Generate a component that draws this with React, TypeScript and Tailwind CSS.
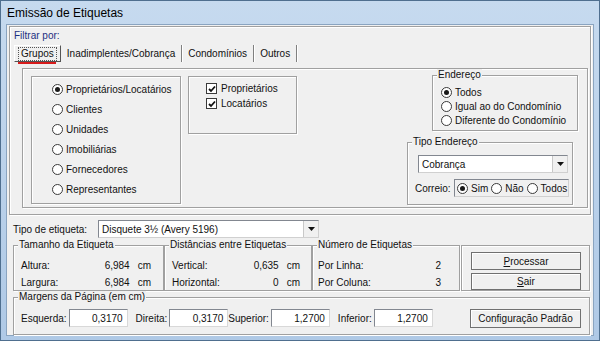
import type { ReactNode } from "react";

const font = { fontFamily: '"Liberation Sans", Arial, sans-serif' };

function Group({ title, className, children }: { title: string; className: string; children?: ReactNode }) {
  return (
    <div className={`relative border border-[#a0a0a0] shadow-[inset_1px_1px_0_#fff,1px_1px_0_#fff] ${className}`}>
      <span className="absolute -top-[7px] left-[4px] bg-[#f0f0f0] px-[1px] leading-[12px] whitespace-nowrap">{title}</span>
      {children}
    </div>
  );
}

function Radio({ label, checked = false }: { label: string; checked?: boolean }) {
  return (
    <div className="flex items-center gap-[3px] whitespace-nowrap leading-[13px]">
      <span className="flex h-[11px] w-[11px] shrink-0 items-center justify-center rounded-full border-[1.5px] border-[#3a3a3a] bg-white">
        {checked && <span className="h-[5px] w-[5px] rounded-full bg-[#1a1a1a]" />}
      </span>
      <span>{label}</span>
    </div>
  );
}

function Check({ label }: { label: string }) {
  return (
    <div className="flex items-center gap-[4px] leading-[13px]">
      <span className="flex h-[11px] w-[11px] items-center justify-center border-[1.5px] border-[#3a3a3a] bg-white">
        <svg width="8" height="8" viewBox="0 0 8 8">
          <path d="M1 4 L3 6 L7 1.5" fill="none" stroke="#111" strokeWidth="1.8" />
        </svg>
      </span>
      <span>{label}</span>
    </div>
  );
}

function Arrow() {
  return (
    <span className="flex h-full w-[15px] items-center justify-center border-l border-[#c8c8c8] bg-[#f0f0f0]">
      <svg width="7" height="4" viewBox="0 0 7 4">
        <path d="M0 0 H7 L3.5 4 Z" fill="#111" />
      </svg>
    </span>
  );
}

function Combo({ value, className }: { value: string; className: string }) {
  return (
    <div className={`flex items-center border border-[#828790] border-r-[#d0d0d0] border-b-[#d0d0d0] bg-white ${className}`}>
      <span className="flex-1 pl-[3px]">{value}</span>
      <Arrow />
    </div>
  );
}

function Field({ label, value, className }: { label: string; value: string; className: string }) {
  return (
    <div className={`flex items-center ${className}`}>
      <span className="mr-[2px]">{label}</span>
      <span className="flex h-[18px] w-[59px] items-center justify-end border border-[#828790] border-r-[#d8d8d8] border-b-[#d8d8d8] bg-white pr-[4px]">
        {value}
      </span>
    </div>
  );
}

function Btn({ children, className }: { children: ReactNode; className: string }) {
  return (
    <div className={`flex items-center justify-center border border-[#707070] bg-[#f0f0f0] shadow-[inset_1px_1px_0_#fff] ${className}`}>
      {children}
    </div>
  );
}

export default function App() {
  return (
    <div style={font} className="flex h-[341px] w-[600px] flex-col border border-[#4f6f8f] bg-gradient-to-b from-[#c6daef] to-[#afc9e6] text-[10px] text-[#111]">
      <div className="flex h-[23px] items-center pl-[6px] text-[12px] text-black">Emissão de Etiquetas</div>
      <div className="mx-[5px] flex h-[312px] flex-col border border-[#8aa4c0] bg-[#f0f0f0]">
        {/* filtro */}
        <div className="mx-[2px] mt-[1px] h-[191px] border border-[#a0a0a0] shadow-[inset_1px_1px_0_#fff,1px_1px_0_#fff]">
          <div className="pl-[4px] pt-[2px] leading-[13px] text-[#1c2f80]">Filtrar por:</div>
          <div className="ml-[4px] mt-[3px] flex h-[17px] items-stretch">
            <div className="relative flex items-center border border-[#fff] border-r-[#555] border-b-[#555] px-[3px]">
              <span className="border border-dotted border-[#555] px-[2px] leading-[12px]">Grupos</span>
              <span className="absolute -bottom-[3px] left-[3px] h-[2px] w-[38px] bg-[#d81c1c]" />
            </div>
            <div className="flex items-center border-r border-[#808080] px-[6px] shadow-[1px_0_0_#fff]">Inadimplentes/Cobrança</div>
            <div className="flex items-center border-r border-[#808080] px-[6px] shadow-[1px_0_0_#fff]">Condomínios</div>
            <div className="flex items-center border-r border-[#808080] px-[6px] shadow-[1px_0_0_#fff]">Outros</div>
          </div>
          <div className="ml-[12px] mr-[2px] mt-[6px] flex h-[140px] border border-[#a0a0a0] shadow-[inset_1px_1px_0_#fff,1px_1px_0_#fff]">
            <div className="ml-[8px] mt-[7px] flex h-[128px] w-[150px] flex-col gap-[7px] border border-[#a0a0a0] pl-[20px] pt-[6px] shadow-[inset_1px_1px_0_#fff,1px_1px_0_#fff]">
              <Radio label="Proprietários/Locatários" checked />
              <Radio label="Clientes" />
              <Radio label="Unidades" />
              <Radio label="Imobiliárias" />
              <Radio label="Fornecedores" />
              <Radio label="Representantes" />
            </div>
            <div className="ml-[7px] mt-[7px] flex h-[58px] w-[109px] flex-col gap-[2px] border border-[#a0a0a0] pl-[17px] pt-[5px] shadow-[inset_1px_1px_0_#fff,1px_1px_0_#fff]">
              <Check label="Proprietários" />
              <Check label="Locatários" />
            </div>
            <div className="ml-auto mr-[9px] mt-[6px] flex flex-col items-end">
              <Group title="Endereço" className="h-[56px] w-[146px] pl-[8px] pt-[10px]">
                <div className="flex flex-col gap-[1px]">
                  <Radio label="Todos" checked />
                  <Radio label="Igual ao do Condomínio" />
                  <Radio label="Diferente do Condomínio" />
                </div>
              </Group>
              <Group title="Tipo Endereço" className="mr-[5px] mt-[11px] h-[63px] w-[166px] pl-[10px] pt-[12px]">
                <Combo value="Cobrança" className="h-[18px] w-[150px]" />
                <div className="mt-[6px] flex items-center">
                  <span className="ml-[-3px] w-[39px]">Correio:</span>
                  <div className="flex h-[18px] w-[115px] items-center gap-[3px] border border-[#828790] border-r-[#d0d0d0] border-b-[#d0d0d0] pl-[2px]">
                    <Radio label="Sim" checked />
                    <Radio label="Não" />
                    <Radio label="Todos" />
                  </div>
                </div>
              </Group>
            </div>
          </div>
        </div>
        {/* tipo de etiqueta */}
        <div className="ml-[6px] mt-[5px] flex items-center">
          <span className="w-[85px]">Tipo de etiqueta:</span>
          <Combo value="Disquete 3½ (Avery 5196)" className="h-[18px] w-[221px]" />
        </div>
        <div className="ml-[6px] mr-[3px] mt-[7px] flex h-[46px]">
          <Group title="Tamanho da Etiqueta" className="w-[151px] pl-[7px] pr-[12px] pt-[11px]">
            <div className="flex leading-[17px]"><span className="flex-1">Altura:</span><span>6,984</span><span className="ml-[8px]">cm</span></div>
            <div className="flex leading-[17px]"><span className="flex-1">Largura:</span><span>6,984</span><span className="ml-[8px]">cm</span></div>
          </Group>
          <Group title="Distâncias entre Etiquetas" className="w-[148px] pl-[7px] pr-[11px] pt-[11px]">
            <div className="flex leading-[17px]"><span className="flex-1">Vertical:</span><span>0,635</span><span className="ml-[8px]">cm</span></div>
            <div className="flex leading-[17px]"><span className="flex-1">Horizontal:</span><span>0</span><span className="ml-[8px]">cm</span></div>
          </Group>
          <Group title="Número de Etiquetas" className="w-[148px] pl-[5px] pr-[18px] pt-[11px]">
            <div className="flex leading-[17px]"><span className="flex-1">Por Linha:</span><span>2</span></div>
            <div className="flex leading-[17px]"><span className="flex-1">Por Coluna:</span><span>3</span></div>
          </Group>
          <div className="ml-[1px] flex flex-1 flex-col gap-[3px] border border-[#a0a0a0] pl-[9px] pr-[8px] pt-[6px] shadow-[inset_1px_1px_0_#fff,1px_1px_0_#fff]">
            <Btn className="h-[18px]"><span><span className="underline">P</span>rocessar</span></Btn>
            <Btn className="h-[18px]"><span><span className="underline">S</span>air</span></Btn>
          </div>
        </div>
        <Group title="Margens da Página (em cm)" className="ml-[6px] mr-[3px] mt-[6px] flex h-[38px] items-center pl-[7px] pt-[4px]">
          <Field label="Esquerda:" value="0,3170" className="" />
          <Field label="Direita:" value="0,3170" className="ml-[8px]" />
          <Field label="Superior:" value="1,2700" className="ml-[0px]" />
          <Field label="Inferior:" value="1,2700" className="ml-[8px]" />
          <Btn className="ml-auto mr-[8px] h-[19px] w-[111px]">Configuração Padrão</Btn>
        </Group>
      </div>
    </div>
  );
}
